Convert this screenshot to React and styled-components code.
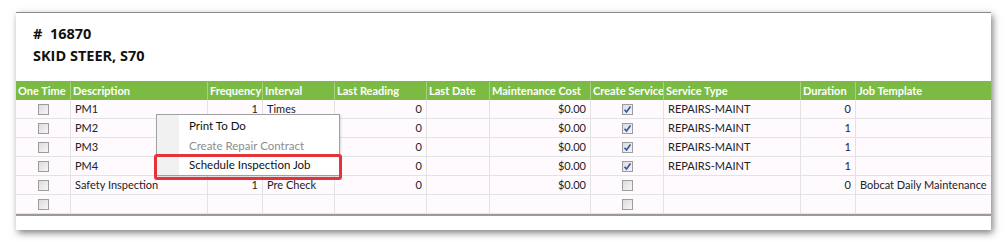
import React from "react";
import styled, { createGlobalStyle } from "styled-components";

const GlobalStyle = createGlobalStyle`
    body {
        margin: 0;
        background: #fff;
        font-family: Lato, "Open Sans", sans-serif;
    }
`;

const Page = styled.div`
    width: 1007px;
    height: 242px;
    padding: 12px 0 0 16px;
    box-sizing: border-box;
`;

const Card = styled.div`
    position: relative;
    width: 975px;
    height: 218px;
    background: #fff;
    border-top: 1px solid #8a8a8a;
    box-sizing: border-box;
    box-shadow: 2px 3px 7px rgba(0, 0, 0, 0.5);
    display: flex;
    flex-direction: column;
`;

const Heading = styled.div`
    height: 68px;
    padding: 10px 0 0 17px;
    box-sizing: border-box;
    font-family: "Open Sans", sans-serif;
    font-weight: 700;
    font-size: 14.5px;
    line-height: 22px;
    color: #111;
`;

const Grid = styled.div`
    display: grid;
    grid-template-columns: 54px 137px 55px 72px 92px 63px 101px 73px 137px 55px 136px;
    border-top: 1px solid #9a9a9a;
    border-bottom: 2px solid #9a9a9a;
    font-size: 11px;
`;

const HeadCell = styled.div`
    background: #7bbb43;
    color: #fff;
    font-weight: 700;
    height: 18px;
    line-height: 18px;
    padding: 0 2px;
    white-space: nowrap;
    overflow: hidden;
    border-left: 1px solid #a9d27f;
    &:first-child {
        border-left: none;
    }
`;

const Cell = styled.div`
    background: #fefafe;
    color: #222;
    height: 19px;
    line-height: 18px;
    padding: 0 4px;
    white-space: nowrap;
    overflow: hidden;
    border-left: 1px solid #e3e3e3;
    border-bottom: 1px solid #e3e3e3;
    box-sizing: border-box;
    text-align: ${(p) => p.$align || "left"};
    display: ${(p) => (p.$center ? "flex" : "block")};
    align-items: center;
    justify-content: center;
    &:nth-child(11n + 1) {
        border-left: none;
    }
`;

const Box = styled.span`
    display: inline-flex;
    align-items: center;
    justify-content: center;
    width: 11px;
    height: 11px;
    border: 1px solid #9c9c9c;
    background: linear-gradient(135deg, #dcdcdc, #f6f6f6);
    box-sizing: border-box;
`;

const Menu = styled.div`
    position: absolute;
    left: 140px;
    top: 101px;
    width: 184px;
    height: 62px;
    border: 1px solid #a0a0a0;
    box-sizing: border-box;
    display: flex;
    flex-direction: column;
    padding-top: 1px;
    background: linear-gradient(to right, #f1f1f1 22px, #fff 22px);
    box-shadow: 1px 1px 2px rgba(0, 0, 0, 0.15);
    font-size: 11.5px;
`;

const MenuItem = styled.div`
    height: 19.5px;
    line-height: 19px;
    padding-left: 32px;
    color: ${(p) => (p.$disabled ? "#8d8d8d" : "#111")};
`;

const Highlight = styled.div`
    position: absolute;
    left: 138px;
    top: 141px;
    width: 188px;
    height: 26px;
    border: 3px solid #e2343a;
    border-radius: 3px;
    box-sizing: border-box;
`;

const columns = [
    "One Time",
    "Description",
    "Frequency",
    "Interval",
    "Last Reading",
    "Last Date",
    "Maintenance Cost",
    "Create Service",
    "Service Type",
    "Duration",
    "Job Template",
];

const rows = [
    { desc: "PM1", freq: "1", interval: "Times", reading: "0", cost: "$0.00", create: true, type: "REPAIRS-MAINT", dur: "0", tmpl: "" },
    { desc: "PM2", freq: "", interval: "", reading: "0", cost: "$0.00", create: true, type: "REPAIRS-MAINT", dur: "1", tmpl: "" },
    { desc: "PM3", freq: "", interval: "", reading: "0", cost: "$0.00", create: true, type: "REPAIRS-MAINT", dur: "1", tmpl: "" },
    { desc: "PM4", freq: "", interval: "", reading: "0", cost: "$0.00", create: true, type: "REPAIRS-MAINT", dur: "1", tmpl: "" },
    { desc: "Safety Inspection", freq: "1", interval: "Pre Check", reading: "0", cost: "$0.00", create: false, type: "", dur: "0", tmpl: "Bobcat Daily Maintenance" },
    { desc: "", freq: "", interval: "", reading: "", cost: "", create: false, type: "", dur: "", tmpl: "" },
];

const CheckBox = ({ checked }) => (
    <Box>
        {checked && (
            <svg width="9" height="9" viewBox="0 0 9 9">
                <path d="M1.5 4.8 L3.5 7 L7.5 1.5" fill="none" stroke="#2e55a8" strokeWidth="1.6" />
            </svg>
        )}
    </Box>
);

const App = () => {
    return (
        <Page>
            <GlobalStyle />
            <Card>
                <Heading>
                    <div>#&nbsp; 16870</div>
                    <div>SKID STEER, S70</div>
                </Heading>
                <Grid>
                    {columns.map((c) => (
                        <HeadCell key={c}>{c}</HeadCell>
                    ))}
                    {rows.map((r, i) => (
                        <React.Fragment key={i}>
                            <Cell $center>
                                <CheckBox />
                            </Cell>
                            <Cell>{r.desc}</Cell>
                            <Cell $align="right">{r.freq}</Cell>
                            <Cell>{r.interval}</Cell>
                            <Cell $align="right">{r.reading}</Cell>
                            <Cell />
                            <Cell $align="right">{r.cost}</Cell>
                            <Cell $center>
                                <CheckBox checked={r.create} />
                            </Cell>
                            <Cell>{r.type}</Cell>
                            <Cell $align="right">{r.dur}</Cell>
                            <Cell>{r.tmpl}</Cell>
                        </React.Fragment>
                    ))}
                </Grid>
                <Menu>
                    <MenuItem>Print To Do</MenuItem>
                    <MenuItem $disabled>Create Repair Contract</MenuItem>
                    <MenuItem>Schedule Inspection Job</MenuItem>
                </Menu>
                <Highlight />
            </Card>
        </Page>
    );
};

export default App;
